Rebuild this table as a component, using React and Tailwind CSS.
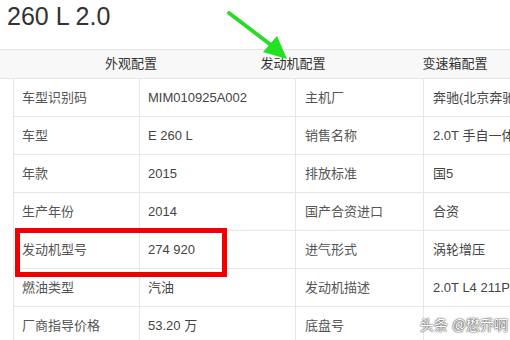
import React from "react";

const rows = [
  ["车型识别码", "MIM010925A002", "主机厂", "奔驰(北京奔驰)"],
  ["车型", "E 260 L", "销售名称", "2.0T 手自一体 豪华型"],
  ["年款", "2015", "排放标准", "国5"],
  ["生产年份", "2014", "国产合资进口", "合资"],
  ["发动机型号", "274 920", "进气形式", "涡轮增压"],
  ["燃油类型", "汽油", "发动机描述", "2.0T L4 211PS"],
  ["厂商指导价格", "53.20 万", "底盘号", ""],
];

export default function App() {
  const font = { fontFamily: "'Liberation Sans', 'Noto Sans CJK SC', sans-serif" };
  return (
    <div className="relative w-[510px] h-[340px] overflow-hidden bg-white" style={font}>
      <div className="h-[49px] pl-[7px] pt-[2px] text-[25px] leading-[28px] text-[#333]">260 L 2.0</div>
      <div className="h-[30px] w-[700px] border-t border-b border-[#e6e6e6] bg-[#f8f8f8] flex items-center pl-[50px] text-[13px] text-[#333]">
        <div className="w-[162px] text-center">外观配置</div>
        <div className="w-[162px] text-center">发动机配置</div>
        <div className="w-[162px] text-center">变速箱配置</div>
      </div>
      <div className="ml-[13px] w-[700px] border-l border-[#e6e6e6] flex flex-col text-[13px] whitespace-nowrap">
        {rows.map((r, i) => (
          <div key={i} className="h-[38px] border-b border-[#e6e6e6] grid grid-cols-[126px_156px_128px_1fr] items-stretch">
            <div className="border-r border-[#e6e6e6] pl-[8px] flex items-center text-[#555]">{r[0]}</div>
            <div className="border-r border-[#e6e6e6] pl-[8px] flex items-center text-[#444]">{r[1]}</div>
            <div className="border-r border-[#e6e6e6] pl-[9px] flex items-center text-[#555]">{r[2]}</div>
            <div className="pl-[9px] flex items-center text-[#444]">{r[3]}</div>
          </div>
        ))}
      </div>
      <div className="absolute left-[15px] top-[228px] w-[212px] h-[49px] border-[5px] border-[#f00000]"></div>
      <svg className="absolute left-0 top-0" width="510" height="80" viewBox="0 0 510 80">
        <line x1="229" y1="13" x2="271" y2="45" stroke="#2bd92b" strokeWidth="4" strokeLinecap="round" />
        <polygon points="287,59 263,52 277,36" fill="#22e022" />
      </svg>
      <div className="absolute left-[420px] top-[315px] text-[14px] text-white [text-shadow:0_0_2px_#333,0_0_1px_#333]">头条 @懋乔啊</div>
    </div>
  );
}
